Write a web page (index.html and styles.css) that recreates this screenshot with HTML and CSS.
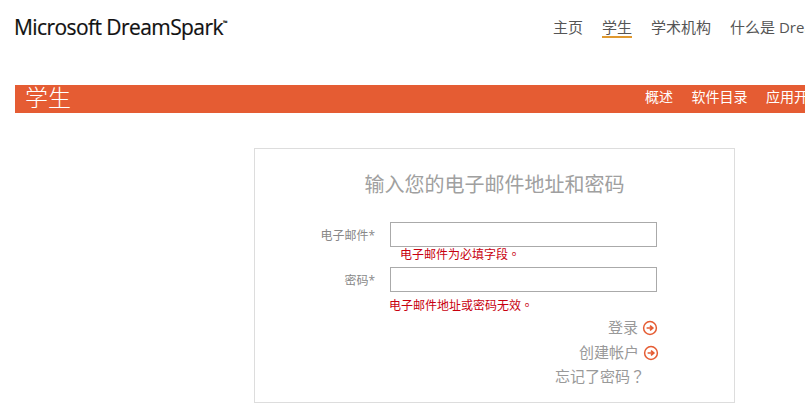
FILE: index.html
```html
<!DOCTYPE html>
<html lang="zh-CN">
<head>
<meta charset="utf-8">
<title>Microsoft DreamSpark</title>
<link rel="stylesheet" href="styles.css">
</head>
<body>
<header class="top">
  <div class="logo">Microsoft DreamSpark<span class="tm">™</span></div>
  <nav class="nav">
    <a>主页</a>
    <a class="active">学生</a>
    <a>学术机构</a>
    <a>什么是 DreamSpark</a>
  </nav>
</header>
<section class="banner">
  <h1 class="banner-title">学生</h1>
  <nav class="subnav">
    <a>概述</a>
    <a>软件目录</a>
    <a>应用开发</a>
  </nav>
</section>
<main class="card">
  <h2 class="card-title">输入您的电子邮件地址和密码</h2>
  <form class="form">
    <label class="label">电子邮件*</label>
    <div class="input"></div>
    <div class="err err-field">电子邮件为必填字段<span class="punct" lang="zh-TW">。</span></div>
    <label class="label">密码*</label>
    <div class="input"></div>
    <div class="err err-form">电子邮件地址或密码无效<span class="punct" lang="zh-TW">。</span></div>
  </form>
  <div class="actions">
    <a class="action action-login">登录
      <svg class="go" viewBox="0 0 16 16" width="16" height="16"><circle cx="8" cy="8" r="6.4" fill="#fff" stroke="#e55c33" stroke-width="1.5"/><path d="M4.6 8H10M8 5.6 10.8 8 8 10.4" fill="none" stroke="#e55c33" stroke-width="1.7"/></svg>
    </a>
    <a class="action action-create">创建帐户
      <svg class="go" viewBox="0 0 16 16" width="16" height="16"><circle cx="8" cy="8" r="6.4" fill="#fff" stroke="#e55c33" stroke-width="1.5"/><path d="M4.6 8H10M8 5.6 10.8 8 8 10.4" fill="none" stroke="#e55c33" stroke-width="1.7"/></svg>
    </a>
    <a class="action-forgot">忘记了密码<span class="punct" lang="zh-TW">？</span></a>
  </div>
</main>
</body>
</html>
```
FILE: styles.css
```css
* { box-sizing: border-box; }
html, body { margin: 0; padding: 0; }
body {
  width: 805px;
  height: 407px;
  overflow: hidden;
  background: #fff;
  font-family: "Open Sans", "Noto Sans CJK SC", sans-serif;
}
.top {
  display: flex;
  align-items: flex-start;
  justify-content: space-between;
  height: 85px;
  padding-left: 14px;
  white-space: nowrap;
}
.logo {
  margin-top: 8px;
  font-size: 21px;
  line-height: 30px;
  letter-spacing: -0.58px;
  color: #111;
  -webkit-text-stroke: 0.2px #111;
}
.tm { font-size: 6px; vertical-align: 10px; }
.nav {
  position: absolute;
  left: 553px;
  top: 17px;
  display: flex;
  gap: 19px;
  font-size: 15px;
  line-height: 20px;
  color: #555;
}
.nav .active {
  height: 21px;
  border-bottom: 2px solid #e0992f;
}
.banner {
  display: flex;
  justify-content: space-between;
  align-items: flex-start;
  position: relative;
  height: 28px;
  margin-left: 15px;
  padding-left: 10px;
  background: #e55c33;
  color: #fff;
  white-space: nowrap;
}
.banner-title {
  margin: 0;
  font-size: 23px;
  font-weight: 300;
  line-height: 24px;
}
.subnav {
  position: absolute;
  left: 630px;
  top: 2px;
  display: flex;
  gap: 18.5px;
  font-size: 14px;
  line-height: 20px;
}
.card {
  width: 481px;
  height: 255px;
  margin: 35px 0 0 254px;
  border: 1px solid #ddd;
  color: #999;
}
.card-title {
  margin: 25px 0 0 0;
  text-align: center;
  font-size: 20px;
  font-weight: 400;
  line-height: 22px;
  color: #a0a0a0;
}
.form {
  display: grid;
  grid-template-columns: 120px 267px;
  column-gap: 15px;
  margin-top: 26px;
}
.label {
  height: 25px;
  font-size: 12px;
  line-height: 27px;
  text-align: right;
  color: #888;
}
.input {
  height: 25px;
  border: 1px solid #aaa;
  background: #fff;
}
.err {
  grid-column: 2;
  font-size: 12px;
  line-height: 16px;
  color: #c8000f;
}
.err-field { margin-top: -1px; padding: 0 0 4px 10px; height: 21px; }
.err-form { margin-top: 5px; margin-left: -1px; }
.punct { font-family: "Noto Sans CJK TC", sans-serif; }
.actions {
  margin-top: 1px;
  display: flex;
  flex-direction: column;
  align-items: flex-end;
  font-size: 15px;
  line-height: 25px;
  color: #999;
}
.action { display: flex; align-items: center; gap: 4px; }
.action-login { margin-right: 76px; }
.action-create { margin-right: 75px; }
.action-forgot { margin-top: -2px; margin-right: 89px; }
```
